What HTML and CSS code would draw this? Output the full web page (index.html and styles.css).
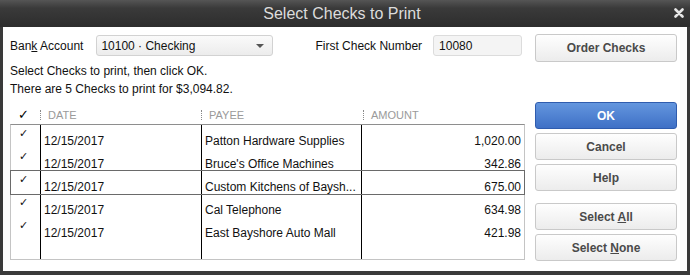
FILE: index.html
```html
<!DOCTYPE html>
<html lang="en">
<head>
    <meta charset="UTF-8">
    <title>Select Checks to Print</title>
    <link rel="stylesheet" href="styles.css">
</head>
<body>
    <div class="window">
        <div class="titlebar">
            <span class="title">Select Checks to Print</span>
            <svg class="close" width="10" height="10" viewBox="0 0 10 10">
                <path d="M1.5 1.5 L8.5 8.5 M8.5 1.5 L1.5 8.5" stroke="#e6e6e6" stroke-width="2.6" stroke-linecap="round"/>
            </svg>
        </div>
        <div class="content">
            <div class="main">
                <div class="top-row">
                    <label class="lbl">Ban<u>k</u> Account</label>
                    <div class="combo">
                        <span>10100 · Checking</span>
                        <span class="arrow"></span>
                    </div>
                    <label class="lbl first-label">First Check Number</label>
                    <div class="num-input">10080</div>
                </div>
                <div class="info first">Select Checks to print, then click OK.</div>
                <div class="info">There are 5 Checks to print for $3,094.82.</div>

                <div class="head">
                    <div class="hcell hcheck">✓</div>
                    <div class="hcell">DATE</div>
                    <div class="hcell">PAYEE</div>
                    <div class="hcell">AMOUNT</div>
                </div>
                <div class="grid">
                    <div class="row">
                        <div class="cell check">✓</div>
                        <div class="cell">12/15/2017</div>
                        <div class="cell">Patton Hardware Supplies</div>
                        <div class="cell amount">1,020.00</div>
                    </div>
                    <div class="row">
                        <div class="cell check">✓</div>
                        <div class="cell">12/15/2017</div>
                        <div class="cell">Bruce's Office Machines</div>
                        <div class="cell amount">342.86</div>
                    </div>
                    <div class="row selected">
                        <div class="cell check">✓</div>
                        <div class="cell">12/15/2017</div>
                        <div class="cell">Custom Kitchens of Baysh...</div>
                        <div class="cell amount">675.00</div>
                    </div>
                    <div class="row">
                        <div class="cell check">✓</div>
                        <div class="cell">12/15/2017</div>
                        <div class="cell">Cal Telephone</div>
                        <div class="cell amount">634.98</div>
                    </div>
                    <div class="row">
                        <div class="cell check">✓</div>
                        <div class="cell">12/15/2017</div>
                        <div class="cell">East Bayshore Auto Mall</div>
                        <div class="cell amount">421.98</div>
                    </div>
                    <div class="row filler">
                        <div class="cell"></div>
                        <div class="cell"></div>
                        <div class="cell"></div>
                        <div class="cell"></div>
                    </div>
                </div>
            </div>
            <div class="side">
                <button class="btn">Order Checks</button>
                <button class="btn primary ok">OK</button>
                <button class="btn">Cancel</button>
                <button class="btn">Help</button>
                <button class="btn select-all">Select <u>A</u>ll</button>
                <button class="btn">Select <u>N</u>one</button>
            </div>
        </div>
    </div>
</body>
</html>
```
FILE: styles.css
```css
body {
    margin: 0;
    padding: 0;
    font-family: "Liberation Sans", Arial, sans-serif;
    font-size: 12px;
    color: #111;
    background-color: #3a3a3a;
}

.window {
    width: 690px;
    height: 275px;
    display: flex;
    flex-direction: column;
    box-sizing: border-box;
}

.titlebar {
    height: 27px;
    position: relative;
    display: flex;
    justify-content: center;
    align-items: center;
    background: linear-gradient(#555, #3a3a3a 30%, #2d2d2d);
}

.title {
    font-family: "Liberation Sans", Arial, sans-serif;
    font-size: 16px;
    color: #dcdcdc;
    padding-top: 1px;
    margin-left: -6px;
}

.close {
    position: absolute;
    right: 6px;
    top: 8px;
}

.content {
    flex: 1;
    display: flex;
    background-color: #fff;
    border: 3px solid #3a3a3a;
    border-top: none;
    border-bottom-width: 4px;
    padding: 6px 10px 0 7px;
}

.main {
    width: 515px;
    display: flex;
    flex-direction: column;
}

.top-row {
    display: flex;
    align-items: center;
    height: 23px;
    margin-top: 1px;
}

.lbl {
    font-size: 12px;
    color: #111;
}

.combo {
    margin-left: 13px;
    width: 177px;
    height: 21px;
    box-sizing: border-box;
    border: 1px solid #d2d2d2;
    border-radius: 3px;
    background: linear-gradient(#fafafa, #ececec);
    display: flex;
    align-items: center;
    justify-content: space-between;
    padding: 0 8px 0 4px;
}

.arrow {
    width: 0;
    height: 0;
    border-left: 4px solid transparent;
    border-right: 4px solid transparent;
    border-top: 4px solid #555;
}

.first-label {
    margin-left: 42px;
}

.num-input {
    margin-left: 11px;
    width: 89px;
    height: 21px;
    box-sizing: border-box;
    border: 1px solid #dcdcdc;
    border-radius: 3px;
    background-color: #f4f4f4;
    padding: 3px 0 0 5px;
}

.info {
    line-height: 18px;
}

.info.first {
    margin-top: 5px;
}

.head {
    display: grid;
    grid-template-columns: 30px 161px 162px 1fr;
    height: 18px;
    margin-top: 8px;
    align-items: center;
}

.hcell {
    font-size: 11px;
    color: #9a9a9a;
    border-left: 1px dotted #8a8a8a;
    padding-left: 7px;
    line-height: 10px;
}

.hcheck {
    border-left: none;
    font-family: "DejaVu Sans", sans-serif;
    font-size: 13px;
    font-weight: bold;
    color: #000;
    padding-left: 8px;
    line-height: 14px;
}

.grid {
    height: 136px;
    box-sizing: border-box;
    border: 1px solid #c4c4c4;
    border-top-color: #8e8e8e;
    display: flex;
    flex-direction: column;
}

.row {
    display: grid;
    grid-template-columns: 29px 161px 160px 1fr;
    height: 23px;
    flex-shrink: 0;
}

.row.filler {
    flex: 1;
}

.row.selected {
    position: relative;
    box-shadow: 0 0 0 1px #6a6a6a;
    z-index: 1;
}

.cell {
    padding: 9px 3px 0 3px;
    line-height: 14px;
    white-space: nowrap;
    overflow: hidden;
}

.cell + .cell {
    border-left: 1px solid #000;
}

.check {
    font-family: "DejaVu Sans", sans-serif;
    font-size: 11px;
    padding: 2px 0 0 8px;
    color: #111;
}

.amount {
    text-align: right;
    padding-right: 3px;
}

.side {
    margin-left: auto;
    width: 142px;
    display: flex;
    flex-direction: column;
}

.btn {
    height: 27px;
    margin-bottom: 4px;
    border: 1px solid #c9c9c9;
    border-radius: 3px;
    background: linear-gradient(#fefefe, #ececec);
    font-family: "Liberation Sans", Arial, sans-serif;
    font-size: 12px;
    font-weight: bold;
    color: #4a4a4a;
    padding: 0;
}

.btn:first-child {
    height: 28px;
    margin-top: 1px;
}

.btn.ok {
    margin-top: 36px;
}

.btn.primary {
    background: linear-gradient(#6396de, #3f70c6);
    border-color: #2f5cae;
    color: #fff;
}

.btn.select-all {
    margin-top: 8px;
}
```
